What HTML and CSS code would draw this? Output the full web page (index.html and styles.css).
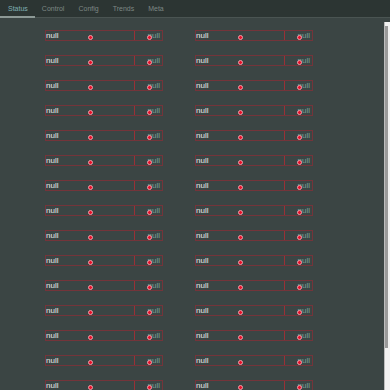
FILE: index.html
```html
<!DOCTYPE html>
<html lang="en">
<head>
    <meta charset="UTF-8">
    <title>Status</title>
    <link rel="stylesheet" href="styles.css">
</head>
<body>
    <div class="tabs">
        <div class="tab active">Status</div>
        <div class="tab">Control</div>
        <div class="tab">Config</div>
        <div class="tab">Trends</div>
        <div class="tab">Meta</div>
    </div>
    <div class="main">
        <div class="panel">
            <div class="grid" id="grid"></div>
        </div>
        <div class="scrollbar">
            <div class="thumb"></div>
        </div>
    </div>

    <script>
        const grid = document.getElementById('grid');
        for (let i = 0; i < 30; i++) {
            grid.innerHTML +=
                '<div class="cell">' +
                    '<div class="seg name">null<span class="dot"></span></div>' +
                    '<div class="seg value">null<span class="dot"></span></div>' +
                '</div>';
        }
    </script>
</body>
</html>
```

FILE: styles.css
```css
body {
    margin: 0;
    height: 100vh;
    display: flex;
    flex-direction: column;
    background-color: #3b4544;
    font-family: 'Liberation Sans', Arial, sans-serif;
    overflow: hidden;
}
.tabs {
    display: flex;
    height: 17px;
    background-color: #2c3533;
    border-bottom: 1px solid #4a5452;
    flex-shrink: 0;
}
.tab {
    padding: 0 7px;
    font-size: 7px;
    line-height: 17px;
    color: #7d8784;
    box-sizing: border-box;
    height: 18px;
    border-bottom: 2px solid transparent;
}
.tab:first-child {
    padding-left: 8px;
}
.tab.active {
    color: #7fb0b4;
    border-bottom-color: #8d9996;
}
.main {
    flex: 1;
    display: flex;
    min-height: 0;
}
.panel {
    flex: 1;
    overflow: hidden;
    padding: 12px 0 0 45px;
}
.grid {
    display: grid;
    grid-template-columns: 118px 118px;
    grid-auto-rows: 11px;
    column-gap: 32px;
    row-gap: 14px;
}
.cell {
    display: flex;
    height: 11px;
    box-sizing: border-box;
    border: 1px solid #74343a;
}
.seg {
    position: relative;
    font-size: 8px;
    line-height: 9px;
    white-space: nowrap;
}
.name {
    width: 88px;
    margin-left: -1px;
    padding-left: 1px;
    color: #e8e8e8;
    border-right: 1px solid #9a3036;
}
.value {
    flex: 1;
    text-align: right;
    color: #76a099;
    padding-right: 2px;
}
.dot {
    position: absolute;
    left: 50%;
    top: 50%;
    width: 3px;
    height: 3px;
    margin: -1px 0 0 -2px;
    border-radius: 50%;
    background-color: #e8102a;
    border: 1px solid #f0a0a8;
}
.scrollbar {
    width: 5px;
    margin-top: 4px;
    background-color: #f2f2f2;
    border-left: 1px solid #bdbdbd;
}
.thumb {
    width: 3px;
    height: 322px;
    margin-top: 4px;
    background-color: #9a9a9a;
}
```
